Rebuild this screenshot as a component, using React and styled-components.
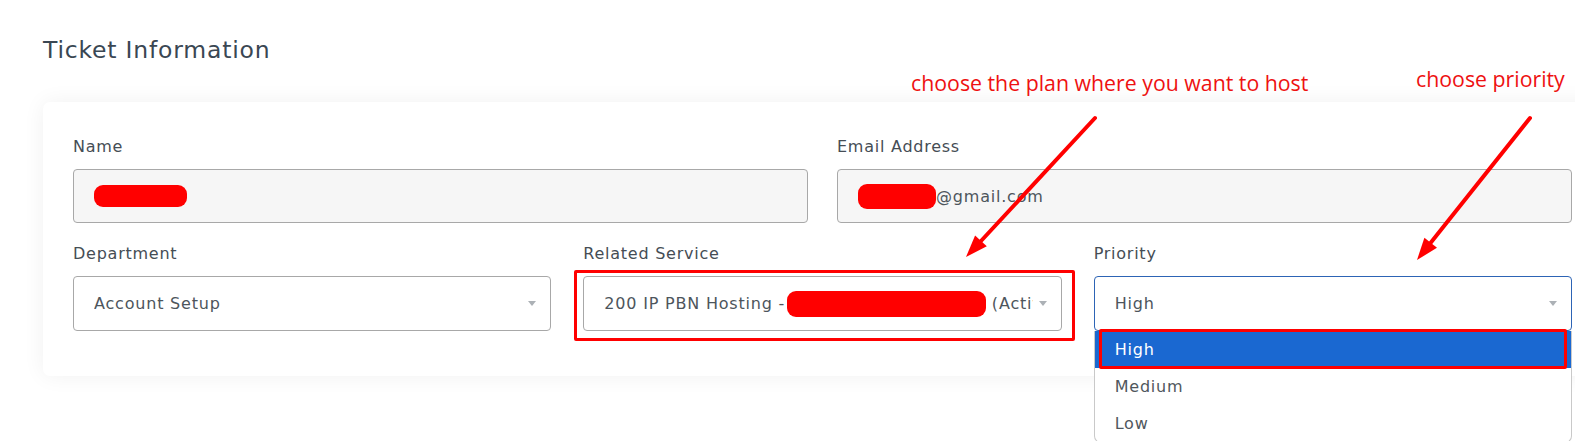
import React from 'react'
import styled, { createGlobalStyle } from 'styled-components'

const GlobalStyle = createGlobalStyle`
  html, body {
    margin: 0;
    padding: 0;
    background: #ffffff;
    overflow: hidden;
  }
  body {
    font-family: "DejaVu Sans", "Noto Sans", sans-serif;
  }
`

const Page = styled.div`
  position: relative;
  width: 1575px;
  height: 441px;
  padding: 34px 0 0 43px;
  box-sizing: border-box;
`

const Title = styled.h2`
  margin: 0;
  font-size: 23.5px;
  line-height: 32px;
  font-weight: 400;
  letter-spacing: 0.8px;
  color: #3a4753;
`

const Card = styled.div`
  margin-top: 36px;
  width: 1559px;
  box-sizing: border-box;
  padding: 34px 30px 45px;
  background: #fff;
  border-radius: 7px;
  box-shadow: 0 0 22px rgba(0, 0, 0, 0.06);
  display: flex;
  flex-direction: column;
  gap: 20px;
`

const Row = styled.div`
  display: grid;
  grid-template-columns: repeat(${p => p.$cols}, minmax(0, 1fr));
  column-gap: ${p => p.$gap}px;
`

const Field = styled.div`
  display: flex;
  flex-direction: column;
  min-width: 0;
`

const Label = styled.label`
  font-size: 16px;
  line-height: 22px;
  letter-spacing: 0.75px;
  color: #454d55;
  margin-bottom: 11px;
`

const Input = styled.div`
  height: 54px;
  box-sizing: border-box;
  border: 1px solid #a8a8a8;
  border-radius: 4px;
  background: #f6f6f6;
  padding: 0 20px;
  display: flex;
  align-items: center;
  font-size: 16px;
  letter-spacing: 0.8px;
  color: #4d555c;
`

const SelectWrap = styled.div`
  position: relative;
`

const Select = styled.div`
  height: 55px;
  box-sizing: border-box;
  border: 1px solid ${p => (p.$open ? '#2d64b5' : '#a8a8a8')};
  border-radius: 4px;
  background: #fff;
  padding: 0 14px 0 20px;
  display: flex;
  align-items: center;
  gap: 6px;
  font-size: 16px;
  letter-spacing: 0.8px;
  color: #4d555c;
`

const SelectText = styled.span`
  flex: 1;
  min-width: 0;
  white-space: nowrap;
  overflow: hidden;
`

const Caret = styled.span`
  flex: none;
  width: 0;
  height: 0;
  border-left: 4.5px solid transparent;
  border-right: 4.5px solid transparent;
  border-top: 5px solid #acb1b6;
`

const Redact = styled.span`
  display: inline-block;
  vertical-align: middle;
  width: ${p => p.$w}px;
  height: ${p => p.$h}px;
  margin-left: ${p => p.$ml || 0}px;
  background: #ff0000;
  border-radius: 9px;
`

const Menu = styled.ul`
  position: absolute;
  top: 100%;
  left: 0;
  right: 0;
  margin: 0;
  padding: 0;
  list-style: none;
  background: #fff;
  border: 1px solid #c9c9c9;
  border-top: none;
  border-radius: 0 0 7px 7px;
  z-index: 2;
`

const Option = styled.li`
  position: relative;
  height: 37px;
  padding-left: 20px;
  display: flex;
  align-items: center;
  font-size: 16px;
  letter-spacing: 0.8px;
  color: ${p => (p.$active ? '#fff' : '#50575d')};
  background: ${p => (p.$active ? '#1a68d1' : 'transparent')};

  ${p => p.$marked && `
    &::after {
      content: '';
      position: absolute;
      left: 4px;
      right: 4px;
      top: -2px;
      bottom: -1px;
      border: 3px solid #ff0000;
      border-radius: 2px;
    }
  `}
`

const MarkBox = styled.div`
  position: absolute;
  left: -9px;
  right: -13px;
  top: -6px;
  bottom: -10px;
  border: 3px solid #ff0000;
  border-radius: 2px;
  pointer-events: none;
`

const Note = styled.div`
  position: absolute;
  left: ${p => p.$x}px;
  top: ${p => p.$y}px;
  font-family: "Open Sans", sans-serif;
  font-size: 21.3px;
  line-height: 28px;
  color: #ee1111;
  white-space: nowrap;
`

const Arrows = styled.svg`
  position: absolute;
  left: 0;
  top: 0;
  pointer-events: none;
  z-index: 3;
`

export default function App() {
  return (
    <>
      <GlobalStyle />
      <Page>
        <Title>Ticket Information</Title>
        <Card>
          <Row $cols={2} $gap={29}>
            <Field>
              <Label>Name</Label>
              <Input>
                <Redact $w={93} $h={22} />
              </Input>
            </Field>
            <Field>
              <Label>Email Address</Label>
              <Input>
                <Redact $w={78} $h={25} />
                @gmail.com
              </Input>
            </Field>
          </Row>
          <Row $cols={3} $gap={32}>
            <Field>
              <Label>Department</Label>
              <Select>
                <SelectText>Account Setup</SelectText>
                <Caret />
              </Select>
            </Field>
            <Field>
              <Label>Related Service</Label>
              <SelectWrap>
                <Select>
                  <SelectText>
                    200 IP PBN Hosting - 1<Redact $w={199} $h={26} $ml={-15} /> (Active)
                  </SelectText>
                  <Caret />
                </Select>
                <MarkBox />
              </SelectWrap>
            </Field>
            <Field>
              <Label>Priority</Label>
              <SelectWrap>
                <Select $open>
                  <SelectText>High</SelectText>
                  <Caret />
                </Select>
                <Menu>
                  <Option $active $marked>High</Option>
                  <Option>Medium</Option>
                  <Option>Low</Option>
                </Menu>
              </SelectWrap>
            </Field>
          </Row>
        </Card>

        <Note $x={911} $y={69}>choose the plan where you want to host</Note>
        <Note $x={1416} $y={65}>choose priority</Note>

        <Arrows width="1575" height="441" viewBox="0 0 1575 441">
          <line x1="1095" y1="118" x2="981" y2="241" stroke="#ff0000" strokeWidth="4" strokeLinecap="round" />
          <polygon points="966,257 986.8,246.3 975.1,235.5" fill="#ff0000" />
          <line x1="1530" y1="118" x2="1430.7" y2="242.8" stroke="#ff0000" strokeWidth="4" strokeLinecap="round" />
          <polygon points="1417,260 1437,247.8 1424.4,237.8" fill="#ff0000" />
        </Arrows>
      </Page>
    </>
  )
}
